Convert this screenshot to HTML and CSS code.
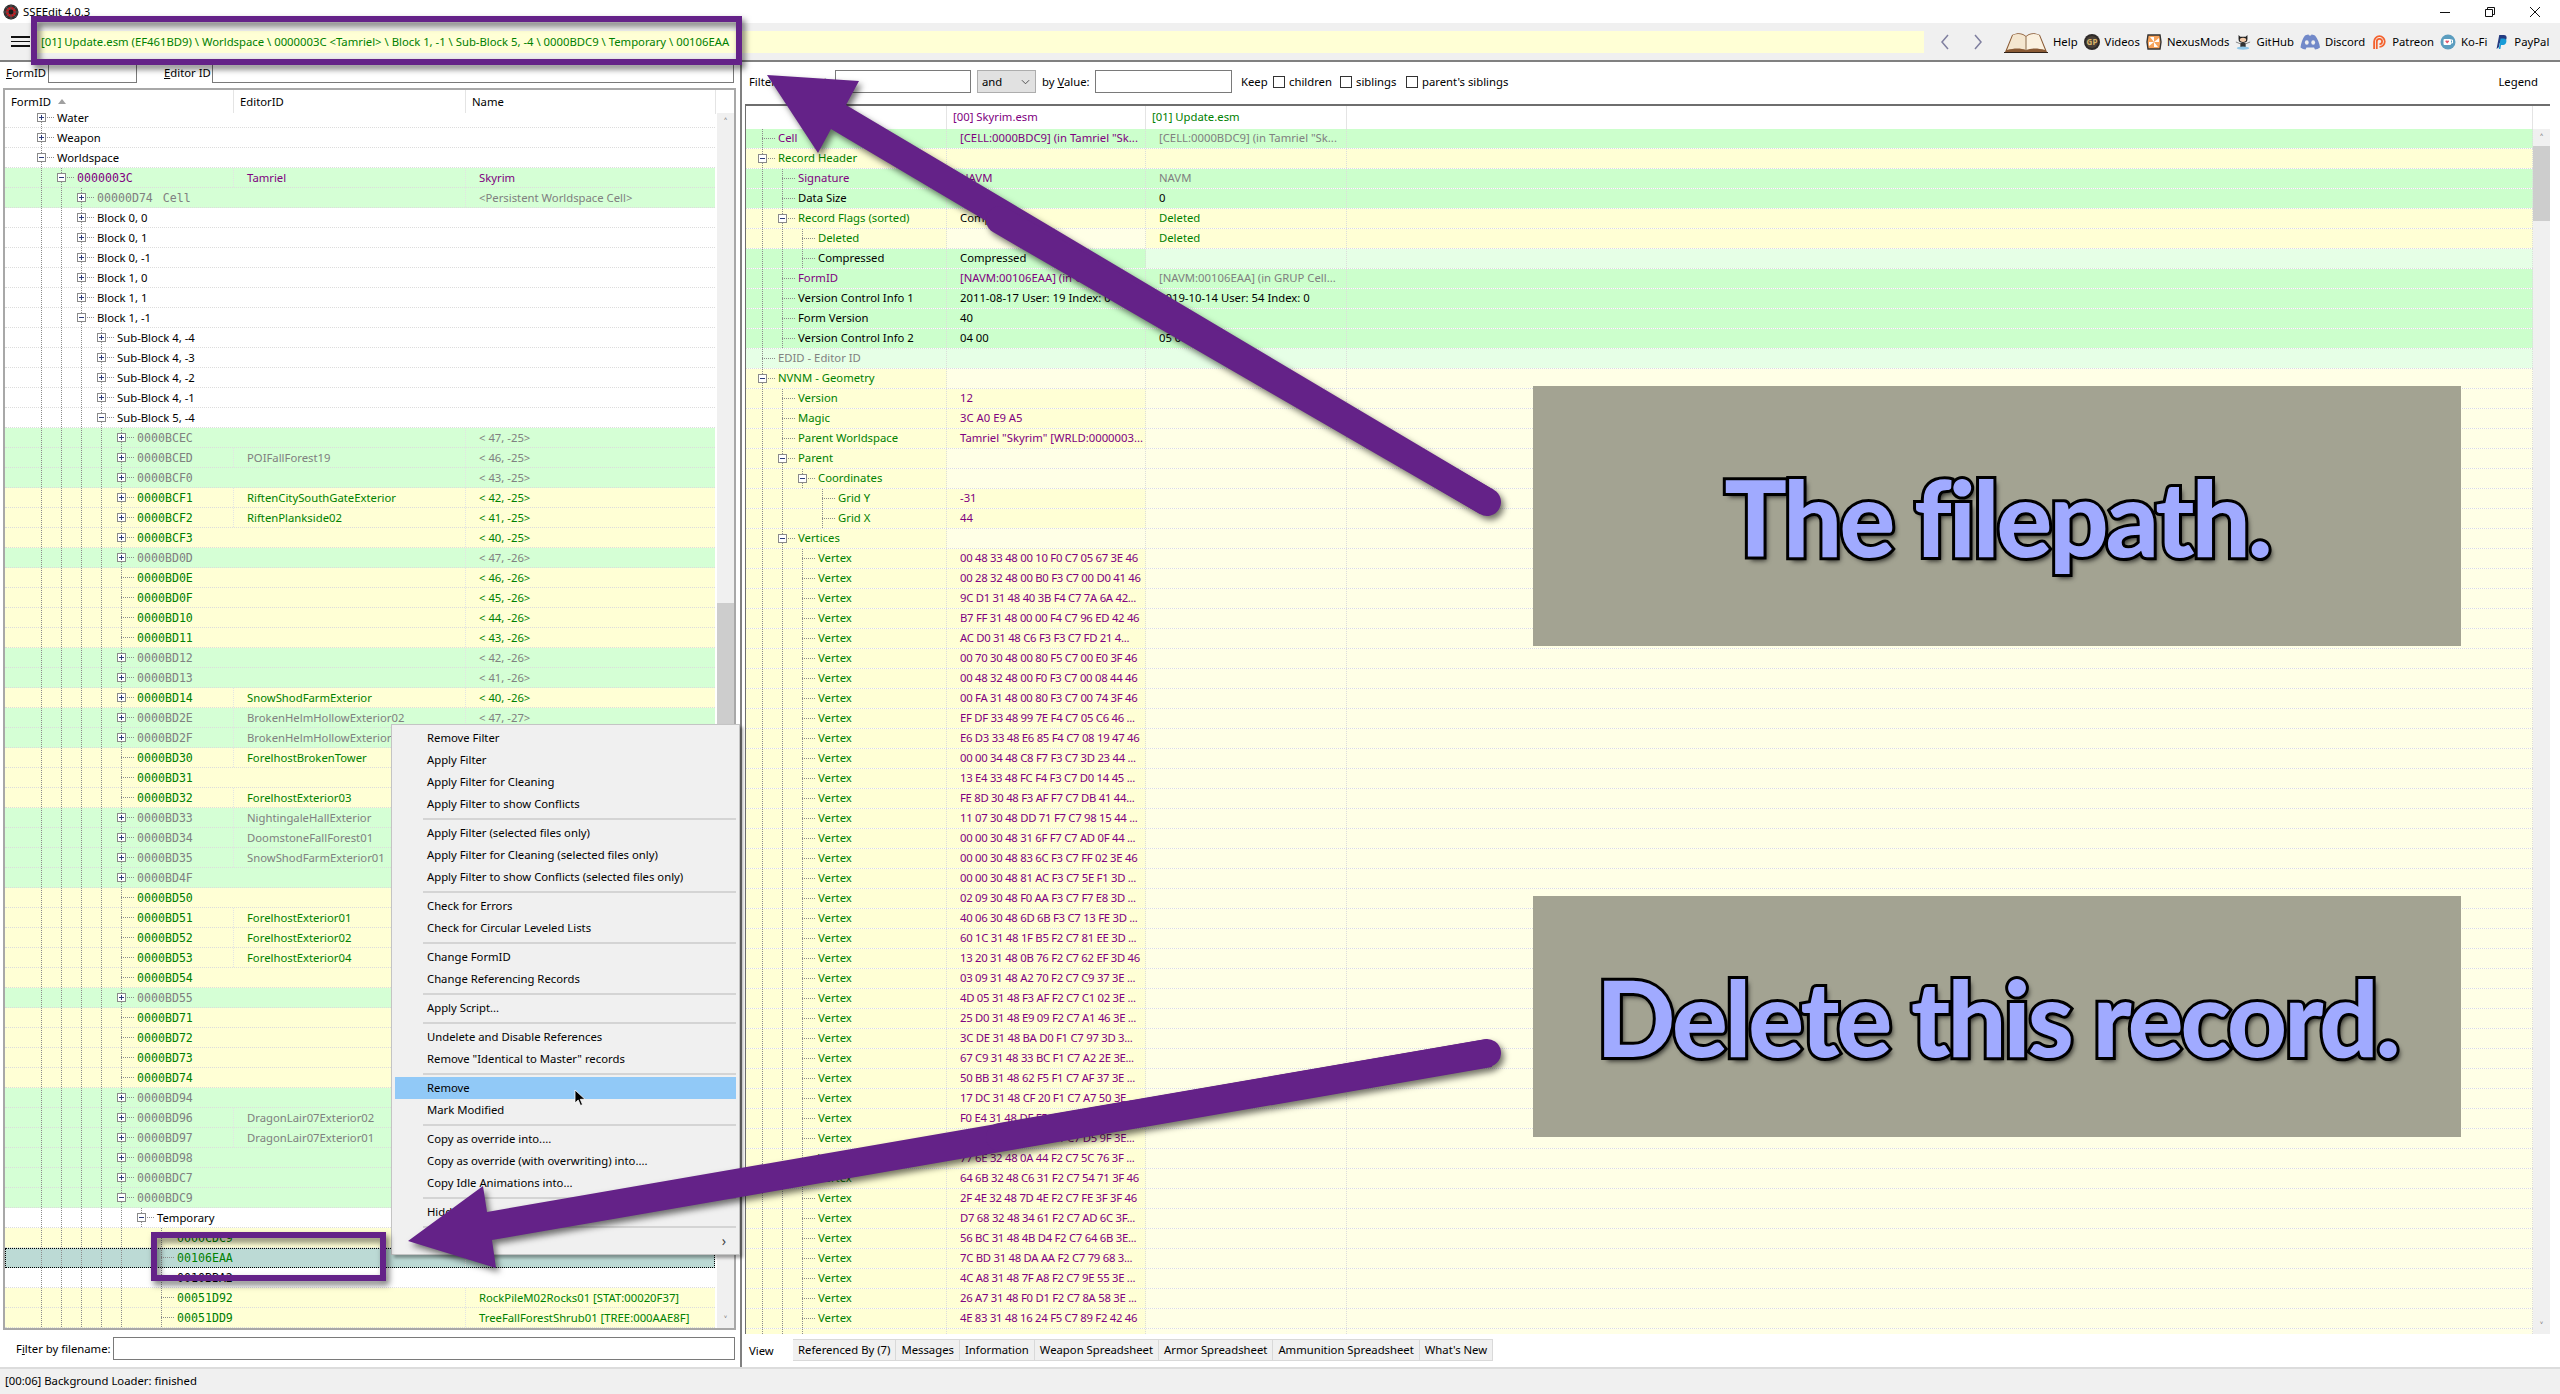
FILE: index.html
```html
<!DOCTYPE html>
<html lang="en">
<head>
    <meta charset="UTF-8">
    <title>SSEEdit 4.0.3</title>
    <link rel="stylesheet" href="styles.css">
</head>
<body>
    <div class="window">
        <div class="titlebar">
            <svg class="app-icon" viewBox="0 0 16 16">
                <circle cx="8" cy="8" r="7.5" fill="#333"/>
                <circle cx="8" cy="8" r="5" fill="#c8161d"/>
                <path d="M8 .5v15M.5 8h15M3 3l10 10M13 3 3 13" stroke="#555" stroke-width="1"/>
                <circle cx="8" cy="8" r="2.4" fill="#1a1a1a"/>
            </svg>
            <span class="app-name">SSEEdit 4.0.3</span>
            <div class="winbtns">
                <svg viewBox="0 0 10 10"><path d="M0 5.5h10" stroke="#111" fill="none"/></svg>
                <svg viewBox="0 0 10 10"><path d="M.5 2.5h7v7h-7zM2.5 2.5v-2h7v7h-2" stroke="#111" fill="none"/></svg>
                <svg viewBox="0 0 10 10"><path d="M0 0l10 10M10 0 0 10" stroke="#111" fill="none"/></svg>
            </div>
        </div>

        <div class="toolbar">
            <div class="hamburger"><i></i><i></i><i></i></div>
            <div class="pathbox">[01] Update.esm (EF461BD9) \ Worldspace \ 0000003C &lt;Tamriel&gt; \ Block 1, -1 \ Sub-Block 5, -4 \ 0000BDC9 \ Temporary \ 00106EAA</div>
            <svg class="chevron" viewBox="0 0 10 18"><path d="M8 2 2 9l6 7" fill="none" stroke="#7f7f9f" stroke-width="1.5"/></svg>
            <svg class="chevron next" viewBox="0 0 10 18"><path d="M2 2l6 7-6 7" fill="none" stroke="#7f7f9f" stroke-width="1.5"/></svg>
            <div class="links">
                <a class="link">
                    <svg class="ico-book" viewBox="0 0 44 22">
                        <path d="M1 21 8 4C14 1 19 2 22 5c3-3 8-4 14-1l7 17H1z" fill="#8a5a34"/>
                        <path d="M3 19 9 4c5-2 10-1 13 2v13c-5-2-12-2-19 0z" fill="#f4e6cf"/>
                        <path d="M41 19 35 4c-5-2-10-1-13 2v13c5-2 12-2 19 0z" fill="#fbf1e0"/>
                        <path d="M22 6v14" stroke="#8a6a4a"/>
                        <path d="M0 21.5h44" stroke="#2f2118"/>
                    </svg>Help</a>
                <a class="link">
                    <svg class="ico" viewBox="0 0 16 16">
                        <circle cx="8" cy="8" r="8" fill="#2e2a28"/>
                        <circle cx="8" cy="8" r="6" fill="#4a4038"/>
                        <text x="8" y="11" class="gp-text">GP</text>
                    </svg>Videos</a>
                <a class="link">
                    <svg class="ico" viewBox="0 0 16 16">
                        <path d="M2 1h12l1 7-1 7H2L1 8z" fill="#f7a35a" stroke="#333" stroke-width="1.4"/>
                        <path d="M8 8 4 3h4zM8 8l5-4v4zM8 8l4 5H8zM8 8l-5 4V8z" fill="#fff"/>
                    </svg>NexusMods</a>
                <a class="link">
                    <svg class="ico" viewBox="0 0 18 18">
                        <path d="M4 1l2 2h6l2-2v5c0 3-2 4-5 4S4 9 4 6z" fill="#222"/>
                        <ellipse cx="9" cy="6.5" rx="3.6" ry="2.4" fill="#f2c9a8"/>
                        <rect x="6" y="10" width="6" height="5" fill="#333"/>
                        <path d="M1 9l5 2M17 9l-5 2" stroke="#777"/>
                        <ellipse cx="9" cy="16" rx="7" ry="1.8" fill="#8fc6e8"/>
                    </svg>GitHub</a>
                <a class="link">
                    <svg class="ico-wide" viewBox="0 0 20 16">
                        <path d="M5 1.5c2-.8 3-1 3.5-1l.5 1h2l.5-1c.5 0 1.500.2 3.500 1 2.500 3 4.500 7.500 5 12-1.500 1.200-3.500 2-5 2l-1-2H6.500l-1 2c-1.500 0-3.500-.8-5-2 .5-4.500 2-9 4.500-12z" fill="#7289c9"/>
                        <ellipse cx="6.800" cy="8.500" rx="1.900" ry="2.200" fill="#f0f0f0"/>
                        <ellipse cx="13.200" cy="8.500" rx="1.900" ry="2.200" fill="#f0f0f0"/>
                    </svg>Discord</a>
                <a class="link">
                    <svg class="ico" viewBox="0 0 16 18">
                        <path d="M2.500 17V8.500a6 6 0 1 1 6 6" fill="none" stroke="#f4622e" stroke-width="2"/>
                        <path d="M5.500 17V8.500a3 3 0 1 1 3 3" fill="none" stroke="#f4622e" stroke-width="2"/>
                    </svg>Patreon</a>
                <a class="link">
                    <svg class="ico" viewBox="0 0 16 16">
                        <circle cx="8" cy="8" r="7.500" fill="#5b9dbf"/>
                        <rect x="3.500" y="5" width="7.500" height="6" rx="1" fill="#fff"/>
                        <path d="M11 6h1.500v3H11" fill="none" stroke="#fff"/>
                        <path d="M7.200 9.500 5.500 7.800c-.6-1 .9-1.800 1.700-.8.8-1 2.300-.2 1.700.8z" fill="#e0556a"/>
                    </svg>Ko-Fi</a>
                <a class="link">
                    <svg class="ico" viewBox="0 0 14 18">
                        <path d="M2 17 5 1h5c3 0 4 2 3 5s-3 4-6 4H5.500L4.500 15z" fill="#253b80"/>
                        <path d="M4.500 17 6.500 5H10c2.500 0 3.500 1.500 3 4-.5 2.500-2.500 3.500-5 3.500H7L6.300 17z" fill="#179bd7"/>
                    </svg>PayPal</a>
            </div>
        </div>

        <div class="main">
            <div class="left">
                <div class="search">
                    <label class="label-formid"><u>F</u>ormID</label>
                    <div class="field field-formid"></div>
                    <label class="label-editor"><u>E</u>ditor ID</label>
                    <div class="field field-editor"></div>
                </div>
                <div class="tree">
                    <div class="tree-head">
                        <div class="head-cell">FormID <span class="sort-up"></span></div>
                        <div class="head-cell">EditorID</div>
                        <div class="head-cell">Name</div>
                    </div>
                    <div class="tree-body">
                        <div class="tree-clip"><div id="treeRows" class="tree-rows"></div></div>
                        <div class="vscroll vscroll-left">
                            <div class="arrow">&#708;</div>
                            <div class="track"><div class="thumb"></div></div>
                            <div class="arrow">&#709;</div>
                        </div>
                    </div>
                </div>
                <div class="fileline">
                    <label class="label-file">F<u>i</u>lter by filename:</label>
                    <div class="field field-file"></div>
                </div>
            </div>

            <div class="right">
                <div class="filterbar">
                    <label class="filter-label">Filter by Signature:</label>
                    <div class="field field-sig"></div>
                    <div class="combo">and<svg viewBox="0 0 10 6"><path d="M1 1l4 4 4-4" fill="none" stroke="#444"/></svg></div>
                    <label class="byvalue">by <u>V</u>alue:</label>
                    <div class="field field-value"></div>
                    <label class="keep">Keep</label>
                    <span class="check"></span><label class="check-label label-children">children</label>
                    <span class="check"></span><label class="check-label label-siblings">siblings</label>
                    <span class="check"></span><label class="check-label">parent's siblings</label>
                    <label class="legend">Legend</label>
                </div>
                <div class="view">
                    <div class="view-main">
                        <div class="view-head">
                            <div class="head-cell"></div>
                            <div class="head-cell tone-p">[00] Skyrim.esm</div>
                            <div class="head-cell tone-g">[01] Update.esm</div>
                            <div class="head-cell"></div>
                        </div>
                        <div class="view-clip"><div id="viewRows"></div></div>
                    </div>
                    <div class="vscroll vscroll-right">
                        <div class="arrow">&#708;</div>
                        <div class="track"><div class="thumb"></div></div>
                        <div class="arrow">&#709;</div>
                    </div>
                </div>
                <div class="tabs">
                    <div class="tab active">View</div>
                    <div class="tab">Referenced By (7)</div>
                    <div class="tab">Messages</div>
                    <div class="tab">Information</div>
                    <div class="tab">Weapon Spreadsheet</div>
                    <div class="tab">Armor Spreadsheet</div>
                    <div class="tab">Ammunition Spreadsheet</div>
                    <div class="tab">What's New</div>
                </div>
            </div>
        </div>

        <div class="status">[00:06] Background Loader: finished</div>
    </div>

    <div class="menu">
        <div class="item">Remove Filter</div>
        <div class="item">Apply Filter</div>
        <div class="item">Apply Filter for Cleaning</div>
        <div class="item">Apply Filter to show Conflicts</div>
        <div class="sep"></div>
        <div class="item">Apply Filter (selected files only)</div>
        <div class="item">Apply Filter for Cleaning (selected files only)</div>
        <div class="item">Apply Filter to show Conflicts (selected files only)</div>
        <div class="sep"></div>
        <div class="item">Check for Errors</div>
        <div class="item">Check for Circular Leveled Lists</div>
        <div class="sep"></div>
        <div class="item">Change FormID</div>
        <div class="item">Change Referencing Records</div>
        <div class="sep"></div>
        <div class="item">Apply Script...</div>
        <div class="sep"></div>
        <div class="item">Undelete and Disable References</div>
        <div class="item">Remove "Identical to Master" records</div>
        <div class="sep"></div>
        <div class="item hot">Remove</div>
        <div class="item">Mark Modified</div>
        <div class="sep"></div>
        <div class="item">Copy as override into....</div>
        <div class="item">Copy as override (with overwriting) into....</div>
        <div class="item">Copy Idle Animations into...</div>
        <div class="sep"></div>
        <div class="item">Hidden</div>
        <div class="sep"></div>
        <div class="item submenu"><span>&#8250;</span></div>
    </div>

    <svg class="cursor" viewBox="0 0 12 18">
        <path d="M1 1v13l3.200-3 2.300 5.500 2-.9L6.300 10.300H11z" fill="#000" stroke="#fff" stroke-width=".8"/>
    </svg>

    <div class="note note-one">The filepath.</div>
    <div class="note note-two">Delete this record.</div>

    <svg class="marks" viewBox="0 0 2560 1394">
        <rect x="34" y="19" width="705" height="43"/>
        <rect x="154" y="1235" width="229" height="43"/>
        <polygon class="solid" points="767,75 859,81 846,105 1494,490 1480,514 831,129 818,153"/>
        <line x1="1487" y1="502" x2="1000" y2="220" class="cap"/>
        <polygon class="solid" points="408,1241 483,1186 487,1212 1487,1039 1492,1067 492,1240 496,1268"/>
        <line x1="1487" y1="1053" x2="1000" y2="1137" class="cap"/>
    </svg>

    <script src="script.js"></script>
</body>
</html>
```

FILE: styles.css
```css
* {
    box-sizing: border-box;
}
body {
    margin: 0;
    width: 2560px;
    height: 1394px;
    overflow: hidden;
    position: relative;
    background: #fff;
    font-family: "Noto Sans", "Open Sans", Arial, sans-serif;
    font-size: 11.3px;
    color: #000;
}
.window {
    height: 1394px;
    display: flex;
    flex-direction: column;
}

/* title + toolbar */
.titlebar {
    height: 23px;
    display: flex;
    align-items: center;
    background: #fff;
}
.app-icon {
    width: 16px;
    height: 16px;
    margin-left: 3px;
}
.app-name {
    margin-left: 4px;
}
.winbtns {
    margin-left: auto;
    display: flex;
    gap: 35px;
    padding-right: 20px;
}
.winbtns svg {
    width: 10px;
    height: 10px;
}
.toolbar {
    height: 39px;
    display: flex;
    align-items: center;
    background: #f0f0f0;
    border-bottom: 2px solid #808080;
}
.hamburger {
    width: 19px;
    margin-left: 11px;
    display: flex;
    flex-direction: column;
    gap: 3px;
}
.hamburger i {
    height: 1.5px;
    background: #111;
}
.pathbox {
    width: 1888px;
    height: 22px;
    margin-left: 6px;
    padding-left: 5px;
    background: #ffffd5;
    color: #008000;
    line-height: 22px;
    white-space: nowrap;
}
.chevron {
    width: 10px;
    height: 18px;
    margin-left: 16px;
}
.chevron.next {
    margin-left: 23px;
}
.links {
    display: flex;
    align-items: center;
    margin-left: 21px;
    gap: 6px;
}
.link {
    display: flex;
    align-items: center;
    gap: 5px;
    white-space: nowrap;
}
.ico {
    width: 16px;
    height: 16px;
}
.ico-wide {
    width: 20px;
    height: 16px;
}
.ico-book {
    width: 44px;
    height: 22px;
}
.gp-text {
    font-size: 8px;
    font-weight: 700;
    fill: #d9b56a;
    text-anchor: middle;
}

.main {
    flex: 1;
    display: flex;
    min-height: 0;
}

/* left pane */
.left {
    width: 742px;
    border-right: 2px solid #808080;
    display: flex;
    flex-direction: column;
}
.search {
    height: 26px;
    display: flex;
    align-items: flex-start;
    padding-left: 6px;
    line-height: 21px;
}
.field {
    height: 23px;
    background: #fff;
    border: 1px solid #7a7a7a;
}
.search .field {
    height: 21px;
    border-top: 0;
}
.label-formid {
    width: 42px;
}
.field-formid {
    width: 89px;
}
.label-editor {
    margin-left: 27px;
    width: 48px;
}
.field-editor {
    width: 522px;
}
.tree {
    width: 733px;
    height: 1242px;
    margin-left: 3px;
    border: 2px solid #a8a8a8;
    border-left-width: 2px;
    display: flex;
    flex-direction: column;
    background: #fff;
}
.tree-head {
    height: 23px;
    display: grid;
    grid-template-columns: 229px 232px 250px;
    flex: none;
    background: #fff;
}
.head-cell {
    padding-left: 6px;
    line-height: 24px;
    border-right: 1px solid #e4e4e4;
    white-space: nowrap;
}
.sort-up {
    display: inline-block;
    margin-left: 4px;
    border: 4px solid transparent;
    border-top: 0;
    border-bottom: 5px solid #a0a0a0;
    vertical-align: 2px;
}
.tree-body {
    flex: 1;
    display: flex;
    min-height: 0;
}
.tree-clip {
    width: 712px;
    overflow: hidden;
}
.tree-rows {
    margin-top: -5px;
}
.row {
    height: 20px;
    display: grid;
    border-bottom: 1px dotted #dcdcdc;
    line-height: 20px;
    white-space: nowrap;
}
.tree-rows .row {
    grid-template-columns: 229px 232px 250px;
}
.row-g { background: #d5ffd5; }
.row-y { background: #ffffd5; }
.row-w { background: #fff; }
.row-sel {
    background: #bcdad5;
    outline: 1px dotted #000;
    outline-offset: -1px;
}
.col {
    overflow: hidden;
    padding-left: 13px;
    border-right: 1px dotted #e3e3e3;
}
.row-w .col {
    border-right-color: transparent;
}
.col-name {
    display: flex;
    padding-left: 0;
}
.tree-rows .col-name {
    padding-left: 26px;
}
.col-bare {
    border-right-color: transparent;
}
.lvl {
    flex: none;
    width: 20px;
    height: 20px;
}
.guide {
    background: repeating-linear-gradient(to bottom, #8c8c8c 0 1px, transparent 1px 2px) 10px 0 / 1px 100% no-repeat;
}
.twig {
    flex: none;
    width: 26px;
    height: 20px;
    display: flex;
    align-items: center;
    background:
        repeating-linear-gradient(to right, #8c8c8c 0 1px, transparent 1px 2px) 10px 9px / 14px 1px no-repeat,
        repeating-linear-gradient(to bottom, #8c8c8c 0 1px, transparent 1px 2px) 10px 0 / 1px 100% no-repeat;
}
.exp {
    width: 9px;
    height: 9px;
    margin: -1px 0 0 6px;
    border: 1px solid #8a8a8a;
    background: linear-gradient(#2a3a7a, #2a3a7a) center / 5px 1px no-repeat, #fff;
}
.exp.plus {
    background:
        linear-gradient(#2a3a7a, #2a3a7a) center / 5px 1px no-repeat,
        linear-gradient(#2a3a7a, #2a3a7a) center / 1px 5px no-repeat,
        #fff;
}
.mono {
    font-family: "DejaVu Sans Mono", "Liberation Mono", monospace;
    font-size: 11.6px;
}
.sig {
    margin-left: 10px;
}
.tone-p { color: #800080; }
.tone-g { color: #008000; }
.tone-m { color: #808080; }
.tone-k { color: #000; }

.vscroll {
    width: 17px;
    display: flex;
    flex-direction: column;
    background: #f0f0f0;
    flex: none;
}
.arrow {
    height: 17px;
    flex: none;
    text-align: center;
    color: #505050;
    font-size: 11px;
    line-height: 17px;
}
.track {
    flex: 1;
}
.thumb {
    background: #cdcdcd;
}
.vscroll-left {
    margin-left: 2px;
}
.vscroll-left .thumb {
    height: 160px;
    margin-top: 473px;
}
.vscroll-right .thumb {
    height: 75px;
}
.fileline {
    flex: 1;
    display: flex;
    align-items: center;
    padding-left: 16px;
}
.label-file {
    width: 97px;
}
.field-file {
    width: 622px;
}

/* right pane */
.right {
    flex: 1;
    display: flex;
    flex-direction: column;
    min-width: 0;
}
.filterbar {
    height: 42px;
    display: flex;
    align-items: center;
    padding: 0 10px 3px 7px;
    white-space: nowrap;
}
.filter-label {
    width: 86px;
}
.field-sig {
    width: 136px;
}
.combo {
    width: 59px;
    height: 23px;
    margin-left: 6px;
    padding: 0 5px 0 4px;
    display: flex;
    align-items: center;
    justify-content: space-between;
    background: #e1e1e1;
    border: 1px solid #adadad;
}
.combo svg {
    width: 9px;
    height: 6px;
}
.byvalue {
    margin-left: 6px;
    width: 53px;
}
.field-value {
    width: 137px;
}
.keep {
    margin-left: 9px;
    width: 32px;
}
.check {
    width: 12px;
    height: 12px;
    margin-right: 4px;
    border: 1px solid #333;
    background: #fff;
}
.label-children {
    width: 51px;
}
.label-siblings {
    width: 50px;
}
.legend {
    margin-left: auto;
    padding-right: 12px;
}
.view {
    height: 1230px;
    margin: 0 10px 0 3px;
    border-top: 2px solid #6e6e6e;
    border-left: 1px solid #6e6e6e;
    display: flex;
    background: #fff;
}
.view-main {
    flex: 1;
    min-width: 0;
    display: flex;
    flex-direction: column;
}
.view-head {
    height: 23px;
    flex: none;
    display: grid;
    grid-template-columns: 201px 199px 201px 1fr;
    line-height: 22px;
}
.view-head .head-cell {
    line-height: 22px;
}
.view-clip {
    flex: 1;
    overflow: hidden;
}
.view-clip .row {
    grid-template-columns: 201px 199px 201px 1fr;
    line-height: 18px;
}
.view-clip .col-name {
    padding-left: 6px;
}
.bg-G { background: #ccffcc; }
.bg-g { background: #e6ffe6; }
.bg-Y { background: #ffffd5; }
.bg-y { background: #ffffe6; }
.view-clip .col {
    border-right-color: #dcdcdc;
}
.hex {
    letter-spacing: -0.27px;
}
.vscroll-right {
    margin-top: 23px;
}
.tabs {
    flex: 1;
    display: flex;
    align-items: flex-start;
    padding-top: 5px;
}
.tab {
    height: 22px;
    padding: 0 5px;
    line-height: 20px;
    background: #f0f0f0;
    border: 1px solid #d9d9d9;
    border-left: 0;
    white-space: nowrap;
}
.tab.active {
    width: 50px;
    margin-left: 1px;
    padding-left: 6px;
    background: #fff;
    border: 0;
    line-height: 24px;
}

.status {
    height: 27px;
    padding-left: 5px;
    background: #f0f0f0;
    border-top: 2px solid #dcdcdc;
    line-height: 23px;
}

/* floating things */
.menu {
    position: absolute;
    left: 391px;
    top: 724px;
    width: 349px;
    padding: 2px 3px;
    background: #f0f0f0;
    border: 1px solid #c4c4c4;
    box-shadow: 3px 3px 3px rgba(0, 0, 0, 0.35);
}
.item {
    height: 22px;
    padding-left: 32px;
    line-height: 22px;
    white-space: nowrap;
}
.item.hot {
    background: #91c9f7;
}
.submenu {
    padding: 0 10px 0 0;
    text-align: right;
    font-size: 14px;
    color: #444;
}
.sep {
    height: 7px;
    margin-left: 28px;
    background: linear-gradient(#d4d4d4, #d4d4d4) center / 100% 2px no-repeat;
}
.cursor {
    position: absolute;
    left: 574px;
    top: 1089px;
    width: 12px;
    height: 18px;
}
.note {
    position: absolute;
    left: 1533px;
    width: 928px;
    display: flex;
    align-items: center;
    justify-content: center;
    background: #a3a392;
    font-family: Lato, "Open Sans", sans-serif;
    font-weight: 900;
    font-size: 104px;
    letter-spacing: -2.9px;
    color: #a0aaff;
    -webkit-text-stroke: 6px #000;
    paint-order: stroke fill;
    text-shadow: 3px 4px 5px rgba(0, 0, 0, 0.75);
    white-space: nowrap;
}
.note-one {
    top: 386px;
    height: 260px;
}
.note-two {
    top: 896px;
    height: 241px;
}
.marks {
    position: absolute;
    left: 0;
    top: 0;
    width: 2560px;
    height: 1394px;
    pointer-events: none;
    filter: drop-shadow(3px 4px 3px rgba(0, 0, 0, 0.55));
}
.marks rect {
    fill: none;
    stroke: #642288;
    stroke-width: 6;
}
.marks .solid {
    fill: #642288;
}
.marks .cap {
    stroke: #642288;
    stroke-width: 28;
    stroke-linecap: round;
}
```

FILE: script.js
```js
const LEFT_ROWS = [];
const VIEW_ROWS = [];

function leftRow(level, exp, name, editorId, nameCol, bg, tone, skip) {
    LEFT_ROWS.push({ level, exp, name, editorId, nameCol, bg, tone, skip });
}

function cellRow(id, exp, editorId, coord, bg) {
    const tone = bg === 'g' ? 'm' : 'g';
    leftRow(4, exp, '<span class="mono">0000' + id + '</span>', editorId, '&lt; ' + coord + '&gt;', bg, tone);
}

leftRow(0, 'plus', 'Water', '', '', 'w', 'k');
leftRow(0, 'plus', 'Weapon', '', '', 'w', 'k');
leftRow(0, 'minus', 'Worldspace', '', '', 'w', 'k');
leftRow(1, 'minus', '<span class="mono">0000003C</span>', 'Tamriel', 'Skyrim', 'g', 'p');
leftRow(2, 'plus', '<span class="mono">00000D74<span class="sig">Cell</span></span>', '', '&lt;Persistent Worldspace Cell&gt;', 'g', 'm');
['Block 0, 0', 'Block 0, 1', 'Block 0, -1', 'Block 1, 0', 'Block 1, 1'].forEach(b => leftRow(2, 'plus', b, '', '', 'w', 'k'));
leftRow(2, 'minus', 'Block 1, -1', '', '', 'w', 'k');
['Sub-Block 4, -4', 'Sub-Block 4, -3', 'Sub-Block 4, -2', 'Sub-Block 4, -1'].forEach(b => leftRow(3, 'plus', b, '', '', 'w', 'k'));
leftRow(3, 'minus', 'Sub-Block 5, -4', '', '', 'w', 'k');

[
    ['BCEC', 'plus', '', '47, -25', 'g'],
    ['BCED', 'plus', 'POIFallForest19', '46, -25', 'g'],
    ['BCF0', 'plus', '', '43, -25', 'g'],
    ['BCF1', 'plus', 'RiftenCitySouthGateExterior', '42, -25', 'y'],
    ['BCF2', 'plus', 'RiftenPlankside02', '41, -25', 'y'],
    ['BCF3', 'plus', '', '40, -25', 'y'],
    ['BD0D', 'plus', '', '47, -26', 'g'],
    ['BD0E', '', '', '46, -26', 'y'],
    ['BD0F', '', '', '45, -26', 'y'],
    ['BD10', '', '', '44, -26', 'y'],
    ['BD11', '', '', '43, -26', 'y'],
    ['BD12', 'plus', '', '42, -26', 'g'],
    ['BD13', 'plus', '', '41, -26', 'g'],
    ['BD14', 'plus', 'SnowShodFarmExterior', '40, -26', 'y'],
    ['BD2E', 'plus', 'BrokenHelmHollowExterior02', '47, -27', 'g'],
    ['BD2F', 'plus', 'BrokenHelmHollowExterior01', '46, -27', 'g'],
    ['BD30', '', 'ForelhostBrokenTower', '45, -27', 'y'],
    ['BD31', '', '', '44, -27', 'y'],
    ['BD32', '', 'ForelhostExterior03', '43, -27', 'y'],
    ['BD33', 'plus', 'NightingaleHallExterior', '42, -27', 'g'],
    ['BD34', 'plus', 'DoomstoneFallForest01', '41, -27', 'g'],
    ['BD35', 'plus', 'SnowShodFarmExterior01', '40, -27', 'g'],
    ['BD4F', 'plus', '', '47, -28', 'g'],
    ['BD50', '', '', '46, -28', 'y'],
    ['BD51', '', 'ForelhostExterior01', '45, -28', 'y'],
    ['BD52', '', 'ForelhostExterior02', '44, -28', 'y'],
    ['BD53', '', 'ForelhostExterior04', '43, -28', 'y'],
    ['BD54', '', '', '42, -28', 'y'],
    ['BD55', 'plus', '', '41, -28', 'g'],
    ['BD71', '', '', '47, -29', 'y'],
    ['BD72', '', '', '46, -29', 'y'],
    ['BD73', '', '', '45, -29', 'y'],
    ['BD74', '', '', '44, -29', 'y'],
    ['BD94', 'plus', '', '47, -30', 'g'],
    ['BD96', 'plus', 'DragonLair07Exterior02', '45, -30', 'g'],
    ['BD97', 'plus', 'DragonLair07Exterior01', '44, -30', 'g'],
    ['BD98', 'plus', '', '43, -30', 'g'],
    ['BDC7', 'plus', '', '45, -31', 'g'],
    ['BDC9', 'minus', '', '44, -31', 'g']
].forEach(r => cellRow(r[0], r[1], r[2], r[3], r[4]));

function childRow(id, sig, nameCol, bg, tone) {
    leftRow(6, '', '<span class="mono">' + id + '<span class="sig">' + sig + '</span></span>', '', nameCol, bg, tone, 5);
}

leftRow(5, 'minus', 'Temporary', '', '', 'w', 'k');
childRow('0000CDC9', 'Landscape', '', 'y', 'g');
childRow('00106EAA', 'Navigation Mesh', '', 'sel', 'g');
childRow('0010BBA2', 'Navigation Mesh', '', 'w', 'k');
childRow('00051D92', 'Placed Object', 'RockPileM02Rocks01 [STAT:00020F37]', 'y', 'g');
childRow('00051DD9', 'Placed Object', 'TreeFallForestShrub01 [TREE:000AAE8F]', 'y', 'g');

function viewRow(level, exp, name, tone, v1, t1, v2, t2, bgs, skip) {
    VIEW_ROWS.push({ level, exp, name, tone, v1, t1, v2, t2, bgs, skip });
}

viewRow(0, '', 'Cell', 'p', '[CELL:0000BDC9] (in Tamriel "Sk...', 'p', '[CELL:0000BDC9] (in Tamriel "Sk...', 'm', 'GGGG');
viewRow(0, 'minus', 'Record Header', 'g', '', '', '', '', 'YYYY');
viewRow(1, '', 'Signature', 'p', 'NAVM', 'p', 'NAVM', 'm', 'GGGG');
viewRow(1, '', 'Data Size', 'k', '0', 'k', '0', 'k', 'GGGG');
viewRow(1, 'minus', 'Record Flags (sorted)', 'g', 'Compressed', 'k', 'Deleted', 'g', 'YYYY');
viewRow(2, '', 'Deleted', 'g', '', '', 'Deleted', 'g', 'YyYY');
viewRow(2, '', 'Compressed', 'k', 'Compressed', 'k', '', '', 'GGgg');
viewRow(1, '', 'FormID', 'p', '[NAVM:00106EAA] (in GRUP Cell...', 'p', '[NAVM:00106EAA] (in GRUP Cell...', 'm', 'GGGG');
viewRow(1, '', 'Version Control Info 1', 'k', '2011-08-17 User: 19 Index: 0', 'k', '2019-10-14 User: 54 Index: 0', 'k', 'GGGG');
viewRow(1, '', 'Form Version', 'k', '40', 'k', '40', 'k', 'GGGG');
viewRow(1, '', 'Version Control Info 2', 'k', '04 00', 'k', '05 00', 'k', 'GGGG');
viewRow(0, '', 'EDID - Editor ID', 'm', '', '', '', '', 'gggg');
viewRow(0, 'minus', 'NVNM - Geometry', 'g', '', '', '', '', 'Yyyy');
viewRow(1, '', 'Version', 'g', '12', 'p', '', '', 'YYyy');
viewRow(1, '', 'Magic', 'g', '3C A0 E9 A5', 'p', '', '', 'YYyy');
viewRow(1, '', 'Parent Worldspace', 'g', 'Tamriel "Skyrim" [WRLD:0000003...', 'p', '', '', 'YYyy');
viewRow(1, 'minus', 'Parent', 'g', '', '', '', '', 'Yyyy');
viewRow(2, 'minus', 'Coordinates', 'g', '', '', '', '', 'Yyyy', 2);
viewRow(3, '', 'Grid Y', 'g', '-31', 'p', '', '', 'YYyy', 2);
viewRow(3, '', 'Grid X', 'g', '44', 'p', '', '', 'YYyy', 2);
viewRow(1, 'minus', 'Vertices', 'g', '', '', '', '', 'Yyyy');

[
    '00 48 33 48 00 10 F0 C7 05 67 3E 46', '00 28 32 48 00 B0 F3 C7 00 D0 41 46',
    '9C D1 31 48 40 3B F4 C7 7A 6A 42...', 'B7 FF 31 48 00 00 F4 C7 96 ED 42 46',
    'AC D0 31 48 C6 F3 F3 C7 FD 21 4...', '00 70 30 48 00 80 F5 C7 00 E0 3F 46',
    '00 48 32 48 00 F0 F3 C7 00 08 44 46', '00 FA 31 48 00 80 F3 C7 00 74 3F 46',
    'EF DF 33 48 99 7E F4 C7 05 C6 46 ...', 'E6 D3 33 48 E6 85 F4 C7 08 19 47 46',
    '00 00 34 48 C8 F7 F3 C7 3D 23 44 ...', '13 E4 33 48 FC F4 F3 C7 D0 14 45 ...',
    'FE 8D 30 48 F3 AF F7 C7 DB 41 44...', '11 07 30 48 DD 71 F7 C7 98 15 44 ...',
    '00 00 30 48 31 6F F7 C7 AD 0F 44 ...', '00 00 30 48 83 6C F3 C7 FF 02 3E 46',
    '00 00 30 48 81 AC F3 C7 5E F1 3D ...', '02 09 30 48 F0 AA F3 C7 F7 E8 3D ...',
    '40 06 30 48 6D 6B F3 C7 13 FE 3D ...', '60 1C 31 48 1F B5 F2 C7 81 EE 3D ...',
    '13 20 31 48 0B 76 F2 C7 62 EF 3D 46', '03 09 31 48 A2 70 F2 C7 C9 37 3E ...',
    '4D 05 31 48 F3 AF F2 C7 C1 02 3E ...', '25 D0 31 48 E9 09 F2 C7 A1 46 3E ...',
    '3C DE 31 48 BA D0 F1 C7 97 3D 3...', '67 C9 31 48 33 BC F1 C7 A2 2E 3E...',
    '50 BB 31 48 62 F5 F1 C7 AF 37 3E ...', '17 DC 31 48 CF 20 F1 C7 A7 50 3E ...',
    'F0 E4 31 48 DF F5 F1 C7 B2 61 3E ...', 'C4 D2 31 48 9E 47 F1 C7 D5 9F 3E...',
    '77 6E 32 48 0A 44 F2 C7 5C 76 3F ...', '64 6B 32 48 C6 31 F2 C7 54 71 3F 46',
    '2F 4E 32 48 7D 4E F2 C7 FE 3F 3F 46', 'D7 68 32 48 34 61 F2 C7 AD 6C 3F...',
    '56 BC 31 48 4B D4 F2 C7 64 6B 3E...', '7C BD 31 48 DA AA F2 C7 79 68 3...',
    '4C A8 31 48 7F A8 F2 C7 9E 55 3E ...', '26 A7 31 48 F0 D1 F2 C7 8A 58 3E ...',
    '4E 83 31 48 16 24 F5 C7 89 F2 42 46', '5F 83 31 48 53 8B F2 C7 62 8B 42 46'
].forEach(v => viewRow(2, '', 'Vertex', 'g', v, 'p', '', '', 'YYyy'));

// indent cells + the twig (expander or plain dotted line)
function treeCells(level, exp, skip) {
    let html = '';
    for (let i = 0; i < level; i++) {
        html += '<span class="lvl' + (i === skip ? '' : ' guide') + '"></span>';
    }
    html += '<span class="twig">' + (exp ? '<i class="exp ' + exp + '"></i>' : '') + '</span>';
    return html;
}

document.getElementById('treeRows').innerHTML = LEFT_ROWS.map(r => `
    <div class="row row-${r.bg} tone-${r.tone}">
        <div class="col col-name ${r.editorId ? '' : 'col-bare'}">${treeCells(r.level, r.exp, r.skip)}<span>${r.name}</span></div>
        <div class="col">${r.editorId}</div>
        <div class="col">${r.nameCol}</div>
    </div>`).join('');

document.getElementById('viewRows').innerHTML = VIEW_ROWS.map(r => `
    <div class="row">
        <div class="col col-name bg-${r.bgs[0]} tone-${r.tone}">${treeCells(r.level, r.exp, r.skip)}<span>${r.name}</span></div>
        <div class="col bg-${r.bgs[1]} tone-${r.t1 || 'k'} ${r.name === 'Vertex' ? 'hex' : ''}">${r.v1}</div>
        <div class="col bg-${r.bgs[2]} tone-${r.t2 || 'k'}">${r.v2}</div>
        <div class="col bg-${r.bgs[3]}"></div>
    </div>`).join('');
```
